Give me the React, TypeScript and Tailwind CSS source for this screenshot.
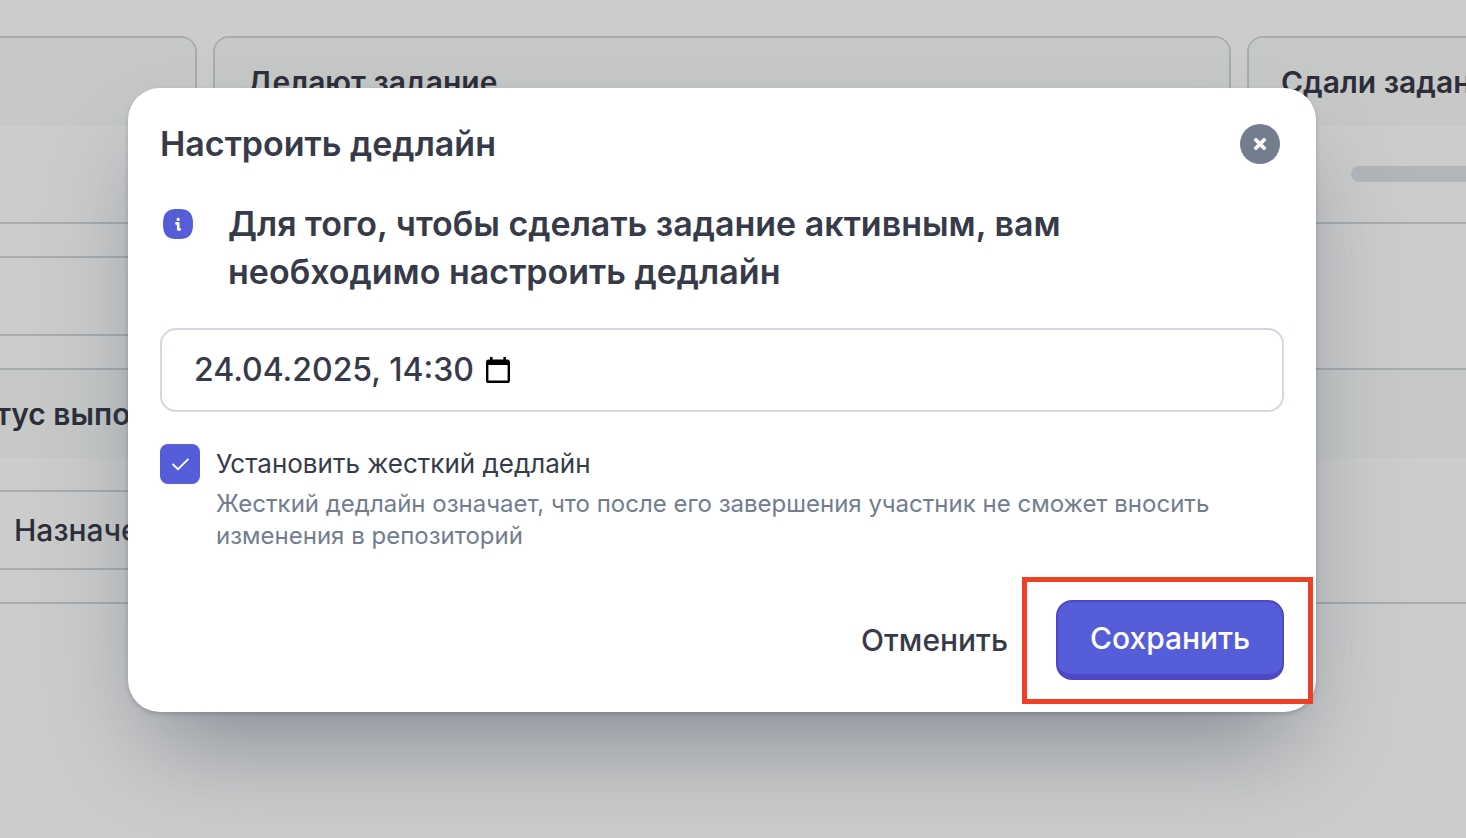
import React, { useState } from 'react';

function InfoIcon() {
    return (
        <svg viewBox="0 0 36 36" className="mt-[6px] h-9 w-9 shrink-0" aria-hidden="true">
            <path
                d="M18 3c9 0 15 2 15 15s-6 15-15 15S3 31 3 18 9 3 18 3z"
                fill="#555dd9"
            />
            <circle cx="18.2" cy="13.4" r="1.6" fill="#fff" />
            <path d="M16.4 17.4h1.8v6h1.6" fill="none" stroke="#fff" strokeWidth="2.6" strokeLinecap="round" strokeLinejoin="round" />
        </svg>
    );
}

function CalendarIcon() {
    return (
        <svg viewBox="0 0 24 26" className="h-[26px] w-6" aria-hidden="true">
            <path
                d="M21.4 2.6H20V0h-2.6v2.6H6.6V0H4v2.6H2.6A2.6 2.6 0 0 0 0 5.2v18.2A2.6 2.6 0 0 0 2.6 26h18.8a2.6 2.6 0 0 0 2.6-2.6V5.2a2.6 2.6 0 0 0-2.6-2.6zm.2 21H2.4V8h19.2z"
                fill="#000"
            />
        </svg>
    );
}

function ColumnCard({ title, className, children }: { title?: string; className: string; children?: React.ReactNode }) {
    return (
        <section className={`shrink-0 overflow-hidden rounded-2xl border-2 border-[#a6acb1] ${className}`}>
            <h3 className="h-[88px] bg-[#c7c9c8] px-8 text-[30px] font-semibold leading-[88px] whitespace-nowrap">{title}</h3>
            <div className="flex h-24 items-center px-[102px]">{children}</div>
        </section>
    );
}

function Board() {
    return (
        <main className="min-h-screen overflow-hidden pt-9 pb-16 text-[#2d2e3a]">
            <div className="flex gap-4">
                <ColumnCard className="-ml-16 w-[261px]" />
                <ColumnCard title="Делают задание" className="w-[1018px]" />
                <ColumnCard title="Сдали задание" className="w-[1018px]">
                    <div className="h-4 w-full rounded-full bg-[#b2b6ba]" />
                </ColumnCard>
            </div>

            <div className="mt-8 -ml-16 h-20 w-1/2 rounded-2xl border-2 border-[#a6acb1]" />

            <section className="-mx-16 mt-8 border-2 border-[#a6acb1]">
                <h3 className="h-[88px] bg-[#c7c9c8] pl-1 text-[30px] font-semibold leading-[88px]">Статус выполнения</h3>
                <div className="py-8">
                    <div className="h-20 w-1/2 border-2 border-[#a6acb1] pl-[74px] text-[30px] font-medium leading-[76px]">Назначено</div>
                </div>
            </section>
        </main>
    );
}

function DeadlineDialog() {
    const [deadline, setDeadline] = useState('24.04.2025, 14:30');
    const [strict, setStrict] = useState(true);

    return (
        <div
            role="dialog"
            aria-labelledby="deadline-title"
            className="rounded-[32px] bg-white p-8 text-[#373a48] shadow-[0_2px_4px_rgba(55,65,80,0.25),0_50px_100px_-24px_rgba(55,70,90,0.5)]"
        >
            <div className="flex items-center justify-between pr-1">
                <h2 id="deadline-title" className="text-[34px] font-semibold leading-[48px]">Настроить дедлайн</h2>
                <button type="button" aria-label="Закрыть" className="flex h-10 w-10 items-center justify-center rounded-full bg-[#727d8e]">
                    <svg viewBox="0 0 12 12" className="h-3 w-3" aria-hidden="true">
                        <path d="M2 2l8 8M10 2l-8 8" stroke="#fff" strokeWidth="3.8" strokeLinecap="round" />
                    </svg>
                </button>
            </div>

            <div className="mt-8 flex gap-8">
                <InfoIcon />
                <p className="max-w-[900px] text-[34px] font-semibold leading-[48px]">
                    Для того, чтобы сделать задание активным, вам необходимо настроить дедлайн
                </p>
            </div>

            <div className="mt-8 flex h-[84px] items-center gap-3 rounded-2xl border-2 border-[#d2d8df] px-8">
                <input
                    type="text"
                    aria-label="Дедлайн"
                    value={deadline}
                    onChange={(e) => setDeadline(e.target.value)}
                    className="field-sizing-content bg-transparent text-[32px] font-medium leading-[40px] outline-none"
                />
                <button type="button" aria-label="Открыть календарь">
                    <CalendarIcon />
                </button>
            </div>

            <div className="mt-8 flex gap-4">
                <span className="relative h-10 w-10 shrink-0">
                    <input
                        id="strict"
                        type="checkbox"
                        checked={strict}
                        onChange={(e) => setStrict(e.target.checked)}
                        className="block h-10 w-10 appearance-none rounded-lg border-2 border-[#d2d8df] checked:border-[#555dd9] checked:bg-[#555dd9]"
                    />
                    {strict && (
                        <svg viewBox="0 0 40 40" className="pointer-events-none absolute inset-0" aria-hidden="true">
                            <path d="M12.5 20l5.5 5.2L28.5 14.8" fill="none" stroke="#fff" strokeWidth="1.9" />
                        </svg>
                    )}
                </span>
                <div>
                    <label htmlFor="strict" className="block text-[26px] leading-[40px]">Установить жесткий дедлайн</label>
                    <p className="mt-1 text-[24px] leading-[32px] text-[#727d8e]">
                        Жесткий дедлайн означает, что после его завершения участник не сможет вносить изменения в репозиторий
                    </p>
                </div>
            </div>

            <div className="mt-12 flex items-center justify-end gap-4">
                <button type="button" className="px-8 text-[30px] font-medium leading-[40px]">Отменить</button>
                <div className="relative">
                    <button
                        type="button"
                        className="h-20 rounded-2xl border-2 border-b-[6px] border-[#5046c8] bg-[#555dd9] px-8 text-[30px] font-medium leading-[40px] text-white"
                    >
                        Сохранить
                    </button>
                    <div className="pointer-events-none absolute -top-[23px] -right-[29px] -bottom-6 -left-[34px] border-[5px] border-[#ec4125]" />
                </div>
            </div>
        </div>
    );
}

export default function App() {
    return (
        <div className="relative min-h-screen overflow-hidden bg-[#ccc] font-['Inter',sans-serif]">
            <Board />
            <div className="absolute inset-0 pt-[88px] pr-[150px] pl-32">
                <DeadlineDialog />
            </div>
        </div>
    );
}
